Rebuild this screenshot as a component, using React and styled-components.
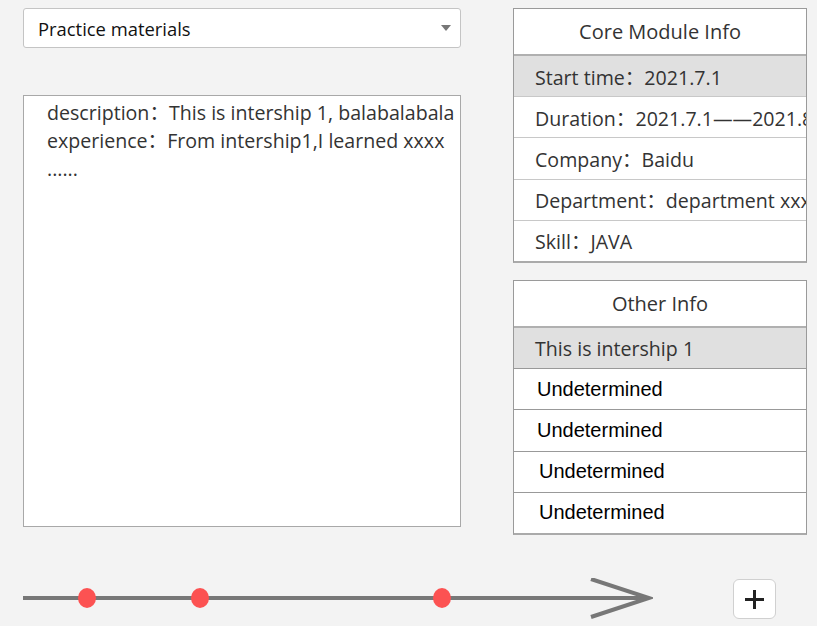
import React from "react";
import styled, { createGlobalStyle } from "styled-components";

const Global = createGlobalStyle`
  html, body { margin: 0; padding: 0; background: #f3f3f3; }
  body { font-family: "Open Sans", "Noto Sans CJK SC", sans-serif; color: #333; }
`;

const Page = styled.div`
  width: 817px;
  height: 626px;
  box-sizing: border-box;
  padding: 8px 0 0 23px;
  display: flex;
  flex-direction: column;
  overflow: hidden;
`;

const Top = styled.div`
  display: flex;
  gap: 52px;
`;

const LeftCol = styled.div`
  width: 438px;
  display: flex;
  flex-direction: column;
  gap: 47px;
`;

const Select = styled.div`
  height: 40px;
  box-sizing: border-box;
  background: #fff;
  border: 1px solid #c4c4c4;
  border-radius: 3px;
  display: flex;
  align-items: center;
  justify-content: space-between;
  padding: 0 9px 0 14px;
  font-size: 18.4px;
  color: #111;
`;

const Caret = styled.span`
  width: 0;
  height: 0;
  border-left: 5px solid transparent;
  border-right: 5px solid transparent;
  border-top: 6px solid #777;
`;

const TextBox = styled.div`
  height: 432px;
  box-sizing: border-box;
  background: #fff;
  border: 1px solid #a8a8a8;
  padding: 3px 0 0 23px;
  font-size: 19.6px;
  line-height: 28px;
  color: #333;
  white-space: nowrap;
  overflow: hidden;
`;

const RightCol = styled.div`
  width: 294px;
  display: flex;
  flex-direction: column;
  gap: 17px;
`;

const Table = styled.div`
  height: 255px;
  box-sizing: border-box;
  background: #fff;
  border: 1px solid #9a9a9a;
  border-bottom: 2px solid #aaa;
  display: flex;
  flex-direction: column;
  overflow: hidden;
`;

const Head = styled.div`
  height: 47px;
  flex: none;
  box-sizing: border-box;
  border-bottom: 2px solid #b0b0b0;
  display: flex;
  align-items: center;
  justify-content: center;
  font-size: 20px;
  color: #333;
`;

const Row = styled.div`
  flex: 1;
  box-sizing: border-box;
  border-bottom: 1px solid ${(p) => p.$line || "#c8c8c8"};
  background: ${(p) => (p.$active ? "#e0e0e0" : "#fff")};
  display: flex;
  align-items: center;
  padding-left: ${(p) => p.$indent || 21}px;
  font-family: ${(p) => (p.$plain ? '"Liberation Sans", Arial, sans-serif' : 'inherit')};
  font-size: ${(p) => (p.$plain ? "20px" : "19.6px")};
  color: ${(p) => (p.$plain ? "#000" : "#333")};
  white-space: nowrap;
  overflow: hidden;
  &:last-child { border-bottom: none; }
`;

const Bottom = styled.div`
  margin-top: 43px;
  display: flex;
  align-items: center;
`;

const PlusButton = styled.button`
  margin-left: 80px;
  width: 43px;
  height: 40px;
  box-sizing: border-box;
  background: #fff;
  border: 1px solid #d0d0d0;
  border-radius: 6px;
  display: flex;
  align-items: center;
  justify-content: center;
  padding: 0;
`;

const Timeline = () => (
  <svg width="630" height="42" viewBox="0 0 630 42">
    <line x1="0" y1="20" x2="626" y2="20" stroke="#777" strokeWidth="4" />
    <polyline points="568,1 626,20 568,39" fill="none" stroke="#777" strokeWidth="4" />
    <ellipse cx="64" cy="20" rx="9" ry="10" fill="#fc5252" />
    <ellipse cx="177" cy="20" rx="9" ry="10" fill="#fc5252" />
    <ellipse cx="419" cy="20" rx="9" ry="10" fill="#fc5252" />
  </svg>
);

const Plus = () => (
  <svg width="19" height="19" viewBox="0 0 19 19">
    <rect x="0" y="8" width="19" height="3" fill="#222" />
    <rect x="8" y="0" width="3" height="19" fill="#222" />
  </svg>
);

export default function App() {
  return (
    <Page>
      <Global />
      <Top>
        <LeftCol>
          <Select>
            <span>Practice materials</span>
            <Caret />
          </Select>
          <TextBox>
            <div>description：This is intership 1, balabalabala</div>
            <div>experience：From intership1,I learned xxxx</div>
            <div>......</div>
          </TextBox>
        </LeftCol>
        <RightCol>
          <Table>
            <Head>Core Module Info</Head>
            <Row $active>Start time：2021.7.1</Row>
            <Row>Duration：2021.7.1——2021.8.1</Row>
            <Row>Company：Baidu</Row>
            <Row>Department：department xxx</Row>
            <Row>Skill：JAVA</Row>
          </Table>
          <Table>
            <Head>Other Info</Head>
            <Row $active $line="#999">This is intership 1</Row>
            <Row $plain $indent={23} $line="#999">Undetermined</Row>
            <Row $plain $indent={23} $line="#999">Undetermined</Row>
            <Row $plain $indent={25} $line="#999">Undetermined</Row>
            <Row $plain $indent={25} $line="#999">Undetermined</Row>
          </Table>
        </RightCol>
      </Top>
      <Bottom>
        <Timeline />
        <PlusButton>
          <Plus />
        </PlusButton>
      </Bottom>
    </Page>
  );
}
